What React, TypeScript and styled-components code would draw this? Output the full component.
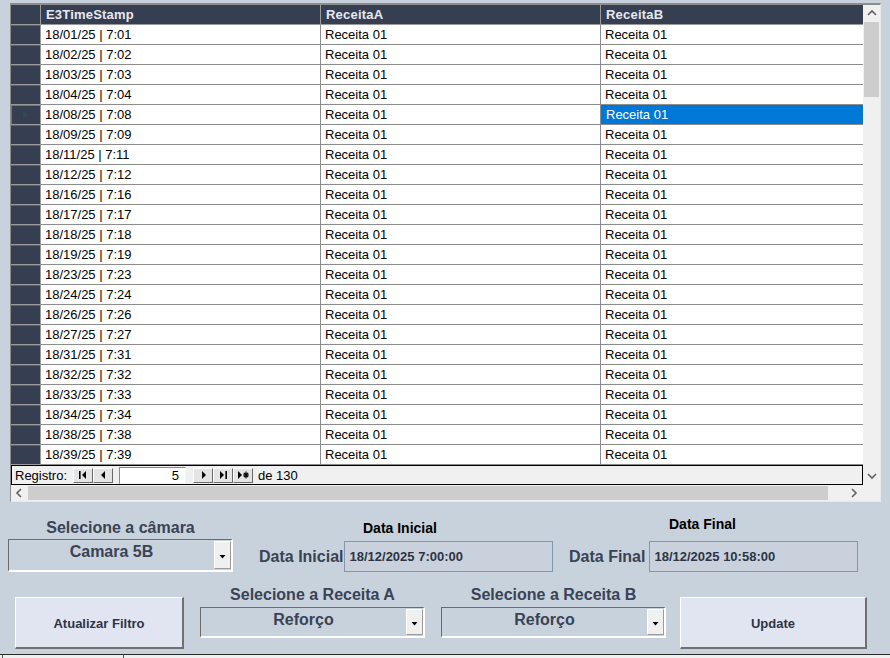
import React from "react";
import styled, { createGlobalStyle } from "styled-components";

const GlobalStyle = createGlobalStyle`
  html, body {
    margin: 0;
    padding: 0;
    background: #c8d2dc;
  }
  body {
    width: 890px;
    height: 658px;
    overflow: hidden;
    font-family: "Liberation Sans", Arial, sans-serif;
  }
`;

const rows = [
  ["18/01/25", "7:01"],
  ["18/02/25", "7:02"],
  ["18/03/25", "7:03"],
  ["18/04/25", "7:04"],
  ["18/08/25", "7:08"],
  ["18/09/25", "7:09"],
  ["18/11/25", "7:11"],
  ["18/12/25", "7:12"],
  ["18/16/25", "7:16"],
  ["18/17/25", "7:17"],
  ["18/18/25", "7:18"],
  ["18/19/25", "7:19"],
  ["18/23/25", "7:23"],
  ["18/24/25", "7:24"],
  ["18/26/25", "7:26"],
  ["18/27/25", "7:27"],
  ["18/31/25", "7:31"],
  ["18/32/25", "7:32"],
  ["18/33/25", "7:33"],
  ["18/34/25", "7:34"],
  ["18/38/25", "7:38"],
  ["18/39/25", "7:39"],
];

const SELECTED = 4;

const Page = styled.div`
  display: flex;
  flex-direction: column;
`;

/* ---------- grid panel ---------- */

const Panel = styled.div`
  margin: 3px 0 0 10px;
  width: 871px;
  height: 499px;
  box-sizing: border-box;
  border-top: 2px solid #8c8c8c;
  border-left: 1px solid #8c8c8c;
  border-right: 1px solid #e8e8e8;
  border-bottom: 1px solid #e8e8e8;
  background: #f0f0f0;
  display: flex;
  flex-direction: column;
`;

const Body = styled.div`
  display: flex;
  height: 480px;
`;

const DataArea = styled.div`
  width: 852px;
  display: flex;
  flex-direction: column;
  background: #ffffff;
`;

const Row = styled.div`
  display: grid;
  grid-template-columns: 30px 280px 280px 262px;
  height: 20px;
`;

const HeadCell = styled.div`
  box-sizing: border-box;
  background: #363f52;
  color: #e6e9ef;
  font-size: 13px;
  font-weight: bold;
  letter-spacing: 0.2px;
  line-height: 19px;
  padding-left: 5px;
  border-right: 1px solid #9a9a9a;
  border-bottom: 1px solid #9a9a9a;
  white-space: nowrap;
  &:last-child {
    border-right: none;
  }
`;

const RowHead = styled.div<{ $current?: boolean }>`
  box-sizing: border-box;
  background: #363f52;
  border-right: 1px solid #9a9a9a;
  border-bottom: 1px solid #9a9a9a;
  box-shadow: ${(p) => (p.$current ? "inset 1px 1px 0 #6f7686" : "inset 0 1px 0 #59606f")};
  display: flex;
  align-items: center;
  padding-left: 12px;
`;

const Cell = styled.div<{ $selected?: boolean }>`
  box-sizing: border-box;
  background: ${(p) => (p.$selected ? "#0078d7" : "#ffffff")};
  color: ${(p) => (p.$selected ? "#ffffff" : "#000000")};
  font-size: 13px;
  line-height: 19px;
  padding-left: ${(p) => (p.$selected ? 5 : 4)}px;
  border-right: 1px solid #8c8c8c;
  border-bottom: 1px solid #8c8c8c;
  white-space: nowrap;
  &:last-child {
    border-right: none;
  }
`;

const Navigator = styled.div`
  box-sizing: border-box;
  height: 20px;
  background: #f0f0f0;
  border: 1px solid #000000;
  display: flex;
  align-items: center;
  padding-left: 3px;
  font-size: 13px;
  color: #000000;
`;

const NavGroup = styled.div<{ $gap: number }>`
  display: flex;
  margin-left: ${(p) => p.$gap}px;
`;

const NavButton = styled.div`
  box-sizing: border-box;
  width: 20px;
  height: 15px;
  background: #e4e4e4;
  border: 1px solid;
  border-color: #ffffff #6a6a6a #6a6a6a #ffffff;
  display: flex;
  align-items: center;
  justify-content: center;
`;

const RecordInput = styled.div`
  box-sizing: border-box;
  margin-left: 6px;
  width: 67px;
  height: 17px;
  background: #ffffff;
  border: 1px solid;
  border-color: #8a8a8a #f4f4f4 #f4f4f4 #8a8a8a;
  text-align: right;
  padding-right: 6px;
  line-height: 15px;
`;

const NavText = styled.span`
  margin-left: 5px;
`;

const VScroll = styled.div`
  width: 17px;
  display: flex;
  flex-direction: column;
  background: #f0f0f0;
`;

const ArrowBox = styled.div<{ $w: number; $h: number }>`
  width: ${(p) => p.$w}px;
  height: ${(p) => p.$h}px;
  flex: none;
  display: flex;
  align-items: center;
  justify-content: center;
`;

const VThumb = styled.div`
  margin: 0 1px;
  height: 75px;
  background: #cdcdcd;
`;

const Spacer = styled.div`
  flex: 1;
`;

const HScroll = styled.div`
  height: 16px;
  display: flex;
  align-items: center;
  background: #f0f0f0;
`;

const HThumb = styled.div`
  width: 800px;
  height: 14px;
  background: #cdcdcd;
`;

/* ---------- controls ---------- */

const ControlsRow = styled.div<{ $top: number; $height: number }>`
  display: flex;
  margin-top: ${(p) => p.$top}px;
  height: ${(p) => p.$height}px;
`;

const FieldGroup = styled.div<{ $left: number; $width: number }>`
  display: flex;
  flex-direction: column;
  margin-left: ${(p) => p.$left}px;
  width: ${(p) => p.$width}px;
`;

const BigLabel = styled.div`
  font-size: 16px;
  font-weight: bold;
  color: #3a4356;
  line-height: 20px;
  height: 20px;
  text-align: center;
  white-space: nowrap;
`;

const Select = styled.div<{ $top: number; $height: number }>`
  box-sizing: border-box;
  margin-top: ${(p) => p.$top}px;
  height: ${(p) => p.$height}px;
  display: flex;
  background: #c8d2dc;
  border-top: 1px solid #6b6b6b;
  border-left: 1px solid #6b6b6b;
  border-right: 2px solid #ffffff;
  border-bottom: 2px solid #ffffff;
`;

const SelectText = styled.div`
  flex: 1;
  text-align: center;
  font-size: 16px;
  font-weight: bold;
  color: #3a4356;
  line-height: 18px;
  padding-top: 3px;
`;

const DropButton = styled.div`
  box-sizing: border-box;
  width: 17px;
  margin: 1px 0 1px 0;
  background: #f0f0f0;
  border: 1px solid;
  border-color: #ffffff #9a9a9a #9a9a9a #ffffff;
  display: flex;
  align-items: center;
  justify-content: center;
  padding-top: 3px;
`;

const DateTitle = styled.div<{ $dx: number; $dy: number }>`
  margin-left: ${(p) => p.$dx}px;
  margin-top: ${(p) => p.$dy}px;
  font-size: 14px;
  font-weight: bold;
  color: #000000;
  line-height: 16px;
  height: 16px;
  white-space: nowrap;
`;

const DateRow = styled.div<{ $top: number; $gap: number }>`
  display: flex;
  align-items: center;
  gap: ${(p) => p.$gap}px;
  margin-top: ${(p) => p.$top}px;
  height: 31px;
`;

const DateLabel = styled.span`
  flex: none;
  font-size: 16px;
  font-weight: bold;
  color: #3a4356;
  white-space: nowrap;
`;

const DateInput = styled.div`
  flex: 1;
  box-sizing: border-box;
  height: 31px;
  border: 1px solid #8496ae;
  background: #c9d2dc;
  padding-left: 4px;
  font-size: 13px;
  font-weight: bold;
  color: #2d3446;
  line-height: 29px;
  white-space: nowrap;
`;

const ActionButton = styled.div<{ $left: number; $width: number }>`
  box-sizing: border-box;
  margin: 12px 0 0 ${(p) => p.$left}px;
  width: ${(p) => p.$width}px;
  height: 52px;
  background: #e1e5f1;
  border-top: 1px solid #ffffff;
  border-left: 1px solid #ffffff;
  border-right: 2px solid #707070;
  border-bottom: 2px solid #707070;
  display: flex;
  align-items: center;
  justify-content: center;
  padding-top: 2px;
  font-size: 13px;
  font-weight: bold;
  color: #2d3446;
`;

const StatusBar = styled.div`
  margin-top: 5px;
  height: 4px;
  border-top: 1px solid #2a2a2a;
  background: #f0f0f0;
  display: flex;
`;

const StatusCell = styled.div<{ $left: number; $width: number }>`
  margin-left: ${(p) => p.$left}px;
  width: ${(p) => p.$width}px;
  border-left: 1px solid #555555;
`;

/* ---------- icons ---------- */

const Chevron = ({ dir }: { dir: "up" | "down" | "left" | "right" }) => {
  const pts = {
    up: "1,6 5,2 9,6",
    down: "1,2 5,6 9,2",
    left: "6,1 2,5 6,9",
    right: "2,1 6,5 2,9",
  }[dir];
  return (
    <svg width="10" height="10" viewBox="0 0 10 10">
      <polyline points={pts} fill="none" stroke="#606060" strokeWidth="1.6" />
    </svg>
  );
};

const NavIcon = ({ kind }: { kind: "first" | "prev" | "next" | "last" | "new" }) => (
  <svg width="11" height="8" viewBox="0 0 11 8">
    {kind === "first" && (
      <>
        <rect x="1" y="0" width="1.6" height="8" fill="#000" />
        <polygon points="8,0 4,4 8,8" fill="#000" />
      </>
    )}
    {kind === "prev" && <polygon points="7,0 3,4 7,8" fill="#000" />}
    {kind === "next" && <polygon points="4,0 8,4 4,8" fill="#000" />}
    {kind === "last" && (
      <>
        <polygon points="2,0 6,4 2,8" fill="#000" />
        <rect x="7.4" y="0" width="1.6" height="8" fill="#000" />
      </>
    )}
    {kind === "new" && (
      <>
        <polygon points="0,0 4,4 0,8" fill="#000" />
        <path d="M8 0.5V7.5M5 4H11M5.8 1.8L10.2 6.2M10.2 1.8L5.8 6.2" stroke="#000" strokeWidth="1.2" />
      </>
    )}
  </svg>
);

const Marker = () => (
  <svg width="5" height="9" viewBox="0 0 5 9">
    <polygon points="0,0 5,4.5 0,9" fill="#2c4c5c" />
  </svg>
);

const DownTriangle = () => (
  <svg width="7" height="4" viewBox="0 0 7 4">
    <polygon points="0.5,0 6.5,0 3.5,3.5" fill="#000" />
  </svg>
);

/* ---------- app ---------- */

const App: React.FC = () => {
  return (
    <Page>
      <GlobalStyle />
      <Panel>
        <Body>
          <DataArea>
            <Row>
              <HeadCell />
              <HeadCell>E3TimeStamp</HeadCell>
              <HeadCell>ReceitaA</HeadCell>
              <HeadCell>ReceitaB</HeadCell>
            </Row>
            {rows.map(([date, time], i) => (
              <Row key={date}>
                <RowHead $current={i === SELECTED}>{i === SELECTED && <Marker />}</RowHead>
                <Cell>
                  {date} | {time}
                </Cell>
                <Cell>Receita 01</Cell>
                <Cell $selected={i === SELECTED}>Receita 01</Cell>
              </Row>
            ))}
            <Navigator>
              Registro:
              <NavGroup $gap={6}>
                <NavButton>
                  <NavIcon kind="first" />
                </NavButton>
                <NavButton>
                  <NavIcon kind="prev" />
                </NavButton>
              </NavGroup>
              <RecordInput>5</RecordInput>
              <NavGroup $gap={7}>
                <NavButton>
                  <NavIcon kind="next" />
                </NavButton>
                <NavButton>
                  <NavIcon kind="last" />
                </NavButton>
                <NavButton>
                  <NavIcon kind="new" />
                </NavButton>
              </NavGroup>
              <NavText>de 130</NavText>
            </Navigator>
          </DataArea>
          <VScroll>
            <ArrowBox $w={17} $h={17}>
              <Chevron dir="up" />
            </ArrowBox>
            <VThumb />
            <Spacer />
            <ArrowBox $w={17} $h={17}>
              <Chevron dir="down" />
            </ArrowBox>
          </VScroll>
        </Body>
        <HScroll>
          <ArrowBox $w={17} $h={16}>
            <Chevron dir="left" />
          </ArrowBox>
          <HThumb />
          <Spacer />
          <ArrowBox $w={17} $h={16}>
            <Chevron dir="right" />
          </ArrowBox>
          <ArrowBox $w={17} $h={16} />
        </HScroll>
      </Panel>

      <ControlsRow $top={16} $height={54}>
        <FieldGroup $left={8} $width={225}>
          <BigLabel>Selecione a câmara</BigLabel>
          <Select $top={1} $height={33}>
            <SelectText>Camara 5B</SelectText>
            <DropButton>
              <DownTriangle />
            </DropButton>
          </Select>
        </FieldGroup>
        <FieldGroup $left={26} $width={294}>
          <DateTitle $dx={104} $dy={2}>
            Data Inicial
          </DateTitle>
          <DateRow $top={5} $gap={1}>
            <DateLabel>Data Inicial</DateLabel>
            <DateInput>18/12/2025 7:00:00</DateInput>
          </DateRow>
        </FieldGroup>
        <FieldGroup $left={16} $width={289}>
          <DateTitle $dx={100} $dy={-2}>
            Data Final
          </DateTitle>
          <DateRow $top={9} $gap={4}>
            <DateLabel>Data Final</DateLabel>
            <DateInput>18/12/2025 10:58:00</DateInput>
          </DateRow>
        </FieldGroup>
      </ControlsRow>

      <ControlsRow $top={13} $height={64}>
        <ActionButton $left={15} $width={169}>
          Atualizar Filtro
        </ActionButton>
        <FieldGroup $left={16} $width={225}>
          <BigLabel>Selecione a Receita A</BigLabel>
          <Select $top={2} $height={31}>
            <SelectText>Reforço</SelectText>
            <DropButton>
              <DownTriangle />
            </DropButton>
          </Select>
        </FieldGroup>
        <FieldGroup $left={16} $width={225}>
          <BigLabel>Selecione a Receita B</BigLabel>
          <Select $top={2} $height={31}>
            <SelectText>Reforço</SelectText>
            <DropButton>
              <DownTriangle />
            </DropButton>
          </Select>
        </FieldGroup>
        <ActionButton $left={14} $width={187}>
          Update
        </ActionButton>
      </ControlsRow>

      <StatusBar>
        <StatusCell $left={2} $width={120} />
        <StatusCell $left={0} $width={100} />
      </StatusBar>
    </Page>
  );
};

export default App;
